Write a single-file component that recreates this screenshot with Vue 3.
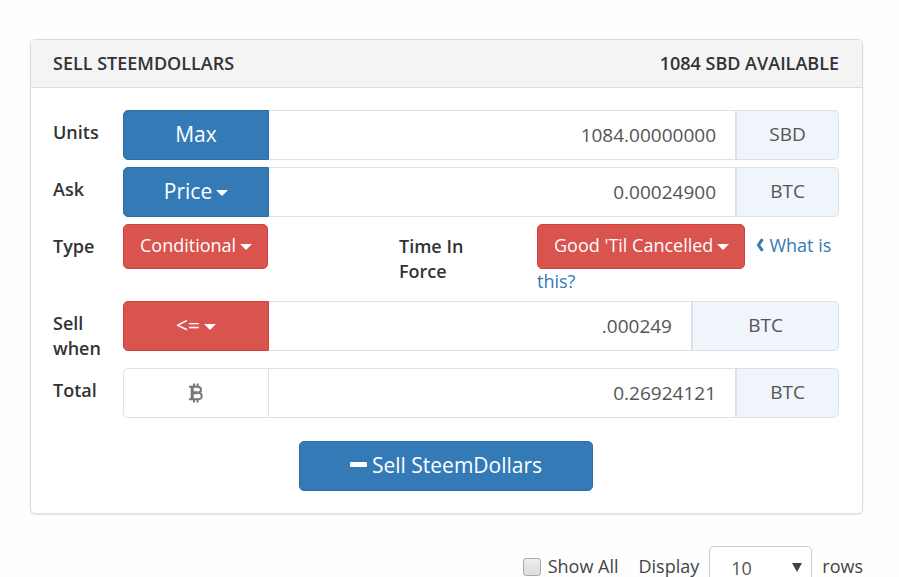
<script setup>
import { ref } from 'vue'

const units = ref('1084.00000000')
const ask = ref('0.00024900')
const trigger = ref('.000249')
const total = ref('0.26924121')
const showAll = ref(false)
const pageSize = ref('10')
</script>

<template>
  <main class="page">
    <section class="panel">
      <header class="panel-head">
        <span>SELL STEEMDOLLARS</span>
        <span>1084 SBD AVAILABLE</span>
      </header>
      <form class="panel-body" @submit.prevent>
        <div class="row">
          <label class="name" for="units">Units</label>
          <div class="group">
            <button type="button" class="btn blue lead">Max</button>
            <input id="units" v-model="units" class="field" type="text" />
            <span class="addon">SBD</span>
          </div>
        </div>
        <div class="row">
          <label class="name" for="ask">Ask</label>
          <div class="group">
            <button type="button" class="btn blue lead">Price<i class="caret"></i></button>
            <input id="ask" v-model="ask" class="field" type="text" />
            <span class="addon">BTC</span>
          </div>
        </div>
        <div class="row">
          <label class="name" for="type">Type</label>
          <div class="options">
            <div>
              <button id="type" type="button" class="btn red drop">Conditional<i class="caret"></i></button>
            </div>
            <label class="name force" for="force">Time In Force</label>
            <div>
              <button id="force" type="button" class="btn red drop">Good 'Til Cancelled<i class="caret"></i></button>
              <a class="help" href="#"><svg class="chevron" viewBox="0 0 8 14" aria-hidden="true"><path d="M6.500 1.200 2.500 7l4 5.800" /></svg>What is this?</a>
            </div>
          </div>
        </div>
        <div class="row">
          <label class="name" for="trigger">Sell when</label>
          <div class="group">
            <button type="button" class="btn red lead">&lt;=<i class="caret"></i></button>
            <input id="trigger" v-model="trigger" class="field" type="text" />
            <span class="addon wide">BTC</span>
          </div>
        </div>
        <div class="row">
          <label class="name" for="total">Total</label>
          <div class="group">
            <span class="lead coin">
              <svg viewBox="0 0 16 20" aria-hidden="true">
                <path d="M1 3.700h8.200c5 0 5 5.500.6 6 5.400.5 5.200 6.600-.4 6.600H1" />
                <path d="M4.200 3.700v12.600M4.200 9.700h5.600" class="stem" />
                <path d="M6 .5v3M9.600 .5v3M6 16.500v3M9.600 16.500v3" />
              </svg>
            </span>
            <input id="total" v-model="total" class="field" type="text" />
            <span class="addon">BTC</span>
          </div>
        </div>
        <button type="submit" class="btn blue submit"><i class="minus"></i>Sell SteemDollars</button>
      </form>
    </section>
    <footer class="pager">
      <label class="all"><input v-model="showAll" type="checkbox" class="tick-box" />Show All</label>
      <label class="size">
        Display
        <span class="select-wrap">
          <select v-model="pageSize">
            <option>10</option>
            <option>25</option>
            <option>50</option>
          </select>
        </span>
        rows
      </label>
    </footer>
  </main>
</template>

<style>
html {
  overflow: hidden;
  background: #fefefe;
}
</style>

<style scoped>
* {
  box-sizing: border-box;
}
.page {
  padding: 39px 36px 0 30px;
  font: 18px/25px "Open Sans", "Noto Sans", sans-serif;
  color: #333;
}
.panel {
  border: 1px solid #ddd;
  border-radius: 5px;
  background: #fff;
  box-shadow: 0 1px 2px rgba(0, 0, 0, 0.1);
}
.panel-head {
  display: flex;
  justify-content: space-between;
  padding: 11px 23px 11px 22px;
  background: #f4f4f4;
  border-bottom: 1px solid #ddd;
  border-radius: 4px 4px 0 0;
  font-weight: 600;
}
.panel-body {
  display: flex;
  flex-direction: column;
  gap: 7px;
  padding: 22px 23px 22px 22px;
}
.row {
  display: grid;
  grid-template-columns: 70px minmax(0, 1fr);
}
.name {
  padding-top: 10px;
  font-weight: 600;
}
.group {
  display: flex;
  height: 50px;
}
.btn {
  border: 1px solid;
  border-radius: 5px;
  font-family: inherit;
  line-height: 25px;
  color: #fff;
  cursor: pointer;
}
.blue {
  background: #337ab7;
  border-color: #2e6da4;
}
.red {
  background: #d9534f;
  border-color: #d43f3a;
}
.lead {
  flex: none;
  width: 146px;
  padding: 0 0 2px;
  border-radius: 5px 0 0 5px;
  font-size: 21px;
}
.caret {
  display: inline-block;
  margin-left: 4px;
  vertical-align: middle;
  border: 6px solid transparent;
  border-top-color: currentColor;
  border-bottom: 0;
}
.field {
  flex: 1;
  min-width: 0;
  padding: 0 19px;
  border: 1px solid #d9e2e8;
  border-left: 0;
  border-radius: 0;
  background: #fff;
  font: 19px "Open Sans", "Noto Sans", sans-serif;
  color: #555;
  text-align: right;
}
.addon {
  flex: none;
  display: flex;
  align-items: center;
  justify-content: center;
  width: 104px;
  padding-bottom: 2px;
  border: 1px solid #d9e2e8;
  border-left-width: 2px;
  margin-left: -1px;
  border-radius: 0 5px 5px 0;
  background: #f0f4fb;
  font-size: 19px;
  color: #555;
}
.wide {
  width: 148px;
}
.coin {
  display: flex;
  align-items: center;
  justify-content: center;
  padding: 0;
  border: 1px solid #d9e2e8;
}
.coin svg {
  width: 16px;
  height: 20px;
  fill: none;
  stroke: #777;
  stroke-width: 2;
}
.coin .stem {
  stroke-width: 3;
}
.options {
  display: grid;
  grid-template-columns: 276fr 138fr 302fr;
}
.force {
  padding-right: 50px;
}
.drop {
  padding: 8px 15px 10px 16px;
  font-size: 18px;
}
.help {
  margin-left: 11px;
  color: #337ab7;
  text-decoration: none;
}
.chevron {
  width: 8px;
  height: 14px;
  margin-right: 5px;
  fill: none;
  stroke: currentColor;
  stroke-width: 3;
}
.submit {
  align-self: center;
  width: 294px;
  height: 50px;
  margin-top: 16px;
  padding: 0 0 2px;
  font-size: 21px;
}
.minus {
  display: inline-block;
  width: 17px;
  height: 5px;
  margin: 0 5px 4px 0;
  vertical-align: middle;
  border-radius: 1px;
  background: currentColor;
}
.pager {
  display: flex;
  justify-content: flex-end;
  align-items: center;
  gap: 20px;
  margin-top: 32px;
  height: 41px;
  color: #444;
}
.all,
.size {
  display: flex;
  align-items: center;
}
.size {
  gap: 10px;
}
.tick-box {
  appearance: none;
  width: 18px;
  height: 18px;
  margin: 0 7px 0 0;
  border: 1px solid #aaa;
  border-radius: 3px;
  background: linear-gradient(#eee, #ddd);
}
.select-wrap {
  position: relative;
}
.select-wrap::after {
  content: "";
  position: absolute;
  top: 17px;
  right: 10px;
  border: 5px solid transparent;
  border-top: 9px solid #444;
  border-bottom: 0;
  pointer-events: none;
}
select {
  appearance: none;
  display: block;
  width: 103px;
  height: 42px;
  padding: 3px 21px 0;
  border: 1px solid #ccc;
  border-radius: 5px;
  background: #fff;
  font: 18px "Open Sans", "Noto Sans", sans-serif;
  color: #555;
}
</style>
